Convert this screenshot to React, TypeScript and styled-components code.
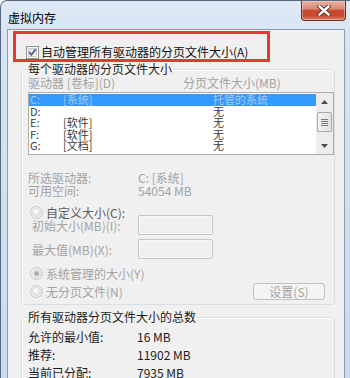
import React from 'react';
import styled, { createGlobalStyle } from 'styled-components';

const FONT = `"Noto Sans CJK SC", "Liberation Sans", sans-serif`;

const GlobalStyle = createGlobalStyle`
  html, body { margin: 0; padding: 0; background: #ffffff; }
  body { font-family: ${FONT}; }
  * { box-sizing: border-box; }
`;

const Window = styled.div`
  width: 350px;
  height: 378px;
  overflow: hidden;
  display: flex;
  flex-direction: column;
  border-top: 1px solid #56697e;
  border-left: 1px solid #56697e;
  border-top-left-radius: 7px;
  background: linear-gradient(180deg, #dfe9f5 0%, #d6e4f3 40px, #c9dbef 100%);
  font-family: ${FONT};
  font-size: 12px;
  color: #1b1b1b;
`;

const TitleBar = styled.div`
  height: 28px;
  flex: none;
  display: flex;
  justify-content: space-between;
  align-items: flex-start;
  padding: 0 4px 0 7px;
`;

const Title = styled.div`
  padding-top: 10px;
  line-height: 13px;
  color: #000;
`;

const CloseButton = styled.div`
  width: 45px;
  height: 20px;
  border: 1px solid #6b2b20;
  border-top: none;
  border-radius: 0 0 4px 4px;
  background: linear-gradient(180deg, #eab0a2 0%, #dc8a78 40%, #c8452e 52%, #c9492f 78%, #d9836c 100%);
  box-shadow: inset 0 0 0 1px rgba(255, 220, 210, 0.45);
  display: flex;
  align-items: center;
  justify-content: center;
`;

const Client = styled.div`
  flex: 1;
  margin: 0 5px 0 6px;
  background: #f0f0f0;
  border: 1px solid #8b9db2;
  border-bottom: none;
  padding: 1px 0 0 5px;
  display: flex;
  flex-direction: column;
  align-items: flex-start;
`;

const RedBox = styled.div`
  width: 257px;
  height: 31px;
  border: 3px solid #e53935;
  padding: 11px 0 0 10px;
`;

const CheckRow = styled.label`
  display: flex;
  align-items: center;
  gap: 2px;
  height: 14px;
  line-height: 14px;
  color: #111;
`;

const GroupBox = styled.fieldset<{ $mt: number }>`
  margin: ${(p) => p.$mt}px 0 0 8px;
  width: 314px;
  min-width: 0;
  padding: 0 1px 4px 6px;
  border: 1px solid #d5dfe5;
  border-radius: 3px;
  box-shadow: inset 1px 1px 0 #fff;
`;

const Legend = styled.legend`
  padding: 0 1px;
  margin-left: -1px;
  line-height: 14px;
  color: #1b1b1b;
`;

const HeaderRow = styled.div`
  display: grid;
  grid-template-columns: 155px 1fr;
  line-height: 14px;
  color: #a3a3a3;
`;

const ListBox = styled.div`
  margin-top: 2px;
  height: 63px;
  width: 306px;
  border: 1px solid #abadb3;
  background: #fff;
  display: flex;
`;

const ListRows = styled.div`
  flex: 1;
  padding-top: 1px;
`;

const ListRow = styled.div<{ $selected?: boolean }>`
  display: grid;
  grid-template-columns: 33px 150px 1fr;
  height: 11.6px;
  line-height: 11.6px;
  font-size: 11px;
  padding-left: 1px;
  background: ${(p) => (p.$selected ? '#3399ff' : 'transparent')};
  color: ${(p) => (p.$selected ? '#a9c8ee' : '#3a3a3a')};
  white-space: nowrap;
`;

const ScrollBar = styled.div`
  width: 17px;
  flex: none;
  background: #ececec;
  display: flex;
  flex-direction: column;
`;

const ArrowBtn = styled.div`
  height: 17px;
  display: flex;
  align-items: center;
  justify-content: center;
`;

const Thumb = styled.div`
  margin: 2px 1px 0;
  height: 20px;
  border: 1px solid #a8a8a8;
  border-radius: 2px;
  background: linear-gradient(90deg, #f3f3f3, #e2e2e2);
  display: flex;
  align-items: center;
  justify-content: center;
`;

const Spacer = styled.div`
  flex: 1;
`;

const InfoGrid = styled.div<{ $mt: number; $row: number; $col: number }>`
  margin-top: ${(p) => p.$mt}px;
  display: grid;
  grid-template-columns: ${(p) => p.$col}px 1fr;
  grid-auto-rows: ${(p) => p.$row}px;
  align-items: center;
  line-height: 13px;
`;

const Muted = styled.span`
  color: #a3a3a3;
`;

const Plain = styled.span`
  color: #1b1b1b;
`;

const RadioRow = styled.div<{ $mt: number; $mb?: number; $dark?: boolean }>`
  margin-top: ${(p) => p.$mt}px;
  margin-bottom: ${(p) => p.$mb ?? 0}px;
  display: flex;
  align-items: center;
  gap: 3px;
  height: 14px;
  padding-left: 2px;
  color: ${(p) => (p.$dark ? '#5e5e5e' : '#a3a3a3')};
`;

const InputRow = styled.div<{ $mt: number }>`
  margin-top: ${(p) => p.$mt}px;
  display: flex;
  align-items: center;
  height: 20px;
  padding-left: 4px;
  color: #a3a3a3;
`;

const InputLabel = styled.span`
  width: 106px;
`;

const TextInput = styled.div`
  width: 75px;
  height: 20px;
  border: 1px solid #c6c6c6;
  border-radius: 2px;
  background: #f0f0f0;
  box-shadow: inset 0 0 0 1px #f7f7f7;
`;

const LastRow = styled.div`
  margin-top: 3px;
  display: flex;
  align-items: center;
  justify-content: space-between;
  height: 17px;
  padding-right: 8px;
`;

const SetButton = styled.div`
  width: 72px;
  height: 17px;
  border: 1px solid #c2c2c2;
  border-radius: 3px;
  background: #f4f4f4;
  color: #a3a3a3;
  display: flex;
  align-items: center;
  justify-content: center;
  line-height: 13px;
`;

const CheckboxIcon = () => (
  <svg width="13" height="13" viewBox="0 0 13 13">
    <defs>
      <linearGradient id="cbg" x1="0" y1="0" x2="1" y2="1">
        <stop offset="0" stopColor="#dadada" />
        <stop offset="1" stopColor="#ffffff" />
      </linearGradient>
    </defs>
    <rect x="0.5" y="0.5" width="12" height="12" fill="#ffffff" stroke="#8e8f8f" />
    <rect x="2.5" y="2.5" width="8" height="8" fill="url(#cbg)" stroke="#c9c9c9" />
    <path d="M3.2 6.2 L5.4 8.8 L9.8 3.2" fill="none" stroke="#4a5f97" strokeWidth="1.8" />
  </svg>
);

const RadioIcon = ({ checked }: { checked?: boolean }) => (
  <svg width="13" height="13" viewBox="0 0 13 13">
    <defs>
      <radialGradient id="rbg" cx="0.4" cy="0.35" r="0.7">
        <stop offset="0" stopColor="#ffffff" />
        <stop offset="1" stopColor="#dcdcdc" />
      </radialGradient>
    </defs>
    <circle cx="6.5" cy="6.5" r="6" fill="#f6f6f6" stroke="#c4c4c4" />
    <circle cx="6.5" cy="6.5" r="4.2" fill="url(#rbg)" stroke="#d9d9d9" />
    {checked && <circle cx="6.5" cy="6.5" r="2.4" fill="#a9a9a9" />}
  </svg>
);

const CloseGlyph = () => (
  <svg width="14" height="11" viewBox="0 0 14 11">
    <path d="M2.5 1.5 L11.5 9.5 M11.5 1.5 L2.5 9.5" stroke="#5a2a22" strokeWidth="4.2" strokeLinecap="square" />
    <path d="M2.5 1.5 L11.5 9.5 M11.5 1.5 L2.5 9.5" stroke="#ffffff" strokeWidth="2.4" strokeLinecap="square" />
  </svg>
);

const UpArrow = () => (
  <svg width="7" height="4" viewBox="0 0 7 4">
    <path d="M0 4 L3.5 0 L7 4 Z" fill="#4d4d4d" />
  </svg>
);

const DownArrow = () => (
  <svg width="7" height="4" viewBox="0 0 7 4">
    <path d="M0 0 L3.5 4 L7 0 Z" fill="#4d4d4d" />
  </svg>
);

const Grip = () => (
  <svg width="7" height="7" viewBox="0 0 7 7">
    <path d="M0 0.5 H7 M0 2.5 H7 M0 4.5 H7 M0 6.5 H7" stroke="#7b7b7b" strokeWidth="1" />
  </svg>
);

const drives = [
  { d: 'C:', label: '[系统]', size: '托管的系统', selected: true },
  { d: 'D:', label: '', size: '无' },
  { d: 'E:', label: '[软件]', size: '无' },
  { d: 'F:', label: '[软件]', size: '无' },
  { d: 'G:', label: '[文档]', size: '无' },
];

export default function App() {
  return (
    <>
      <GlobalStyle />
      <Window>
        <TitleBar>
          <Title>虚拟内存</Title>
          <CloseButton>
            <CloseGlyph />
          </CloseButton>
        </TitleBar>
        <Client>
          <RedBox>
            <CheckRow>
              <CheckboxIcon />
              <span>自动管理所有驱动器的分页文件大小(A)</span>
            </CheckRow>
          </RedBox>

          <GroupBox $mt={0}>
            <Legend>每个驱动器的分页文件大小</Legend>
            <HeaderRow>
              <span>驱动器 [卷标](D)</span>
              <span>分页文件大小(MB)</span>
            </HeaderRow>
            <ListBox>
              <ListRows>
                {drives.map((r) => (
                  <ListRow key={r.d} $selected={r.selected}>
                    <span>{r.d}</span>
                    <span>{r.label}</span>
                    <span>{r.size}</span>
                  </ListRow>
                ))}
              </ListRows>
              <ScrollBar>
                <ArrowBtn>
                  <UpArrow />
                </ArrowBtn>
                <Thumb>
                  <Grip />
                </Thumb>
                <Spacer />
                <ArrowBtn>
                  <DownArrow />
                </ArrowBtn>
              </ScrollBar>
            </ListBox>

            <InfoGrid $mt={16} $row={13} $col={110}>
              <Muted>所选驱动器:</Muted>
              <Muted>C: [系统]</Muted>
              <Muted>可用空间:</Muted>
              <Muted>54054 MB</Muted>
            </InfoGrid>

            <RadioRow $mt={8} $mb={-4} $dark>
              <RadioIcon />
              <span>自定义大小(C):</span>
            </RadioRow>
            <InputRow $mt={0}>
              <InputLabel>初始大小(MB)(I):</InputLabel>
              <TextInput />
            </InputRow>
            <InputRow $mt={4}>
              <InputLabel>最大值(MB)(X):</InputLabel>
              <TextInput />
            </InputRow>

            <RadioRow $mt={7}>
              <RadioIcon checked />
              <span>系统管理的大小(Y)</span>
            </RadioRow>
            <LastRow>
              <RadioRow $mt={0}>
                <RadioIcon />
                <span>无分页文件(N)</span>
              </RadioRow>
              <SetButton>设置(S)</SetButton>
            </LastRow>
          </GroupBox>

          <GroupBox $mt={5}>
            <Legend>所有驱动器分页文件大小的总数</Legend>
            <InfoGrid $mt={3} $row={18} $col={109}>
              <Plain>允许的最小值:</Plain>
              <Plain>16 MB</Plain>
              <Plain>推荐:</Plain>
              <Plain>11902 MB</Plain>
              <Plain>当前已分配:</Plain>
              <Plain>7935 MB</Plain>
            </InfoGrid>
          </GroupBox>
        </Client>
      </Window>
    </>
  );
}
